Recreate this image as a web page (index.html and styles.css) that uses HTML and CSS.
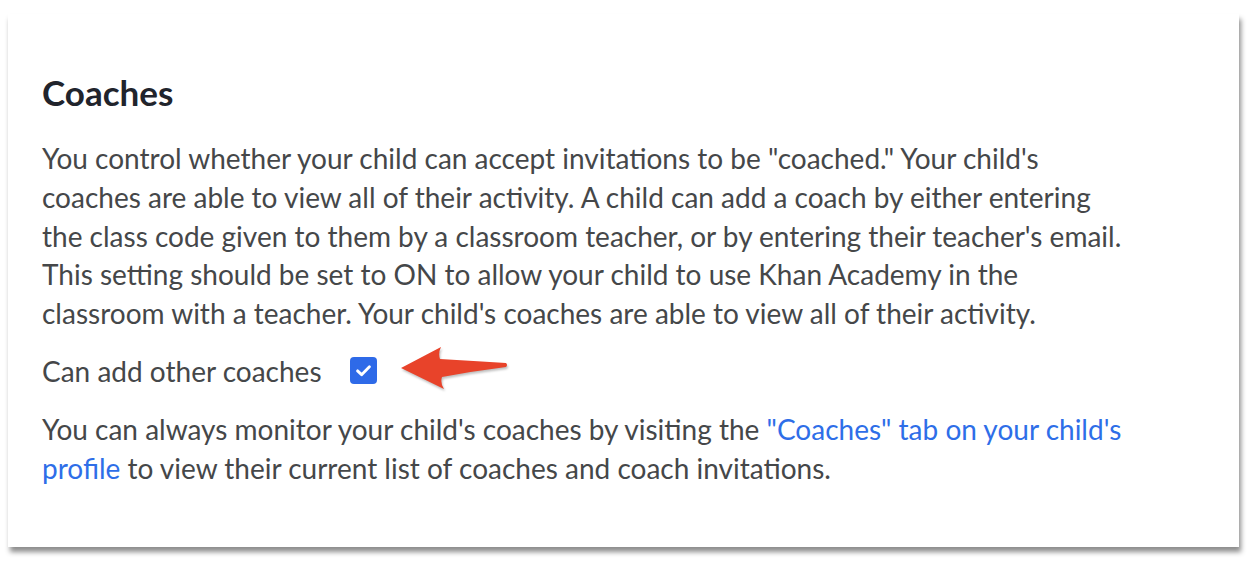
FILE: index.html
```html
<!DOCTYPE html>
<html lang="en">
<head>
    <meta charset="UTF-8">
    <meta name="viewport" content="width=device-width, initial-scale=1.0">
    <title>Coaches - Settings</title>
    <link rel="stylesheet" href="styles.css">
</head>
<body>
    <div class="card">
        <h1>Coaches</h1>
        <p class="text">You control whether your child can accept invitations to be "coached." Your child's coaches are able to view all of their activity. A child can add a coach by either entering the class code given to them by a classroom teacher, or by entering their teacher's email. This setting should be set to ON to allow your child to use Khan Academy in the classroom with a teacher. Your child's coaches are able to view all of their activity.</p>
        <div class="setting-row">
            <label for="canAddCoaches">Can add other coaches</label>
            <span class="checkbox">
                <input type="checkbox" id="canAddCoaches" checked>
                <svg viewBox="0 0 16 16" width="19" height="19" aria-hidden="true">
                    <path d="M3 8.3 L6.4 11.5 L13 4.8" fill="none" stroke="#fff" stroke-width="2.4" stroke-linecap="round" stroke-linejoin="round"/>
                </svg>
            </span>
            <svg class="arrow" viewBox="0 0 112 50" width="112" height="50" aria-hidden="true">
                <path d="M2 25 L42 4 Q39 10 41 16 Q75 18 107 20 Q109 22 107 24 Q75 28 43 34 Q41 40 45 46 Z" fill="#e8432a"/>
            </svg>
        </div>
        <p class="text">You can always monitor your child's coaches by visiting the <a href="#">"Coaches" tab on your child's profile</a> to view their current list of coaches and coach invitations.</p>
    </div>
</body>
</html>
```

FILE: styles.css
```css
* {
    margin: 0;
    padding: 0;
    box-sizing: border-box;
}
body, html {
    height: 100%;
    font-family: Lato, "Open Sans", sans-serif;
    background-color: #fff;
}
.card {
    margin: 14px 9px 0 8px;
    height: 533px;
    padding: 58px 34px 0 34px;
    background-color: #fff;
    box-shadow: 2px 5px 5px rgba(0, 0, 0, 0.45);
}
h1 {
    font-size: 35px;
    font-weight: 700;
    line-height: 40px;
    color: #21242c;
    margin-bottom: 27px;
}
.text {
    max-width: 1080px;
    font-size: 28px;
    line-height: 38.75px;
    color: #454749;
}
.text a {
    color: #2e6ee8;
    text-decoration: none;
}
.setting-row {
    display: flex;
    align-items: center;
    height: 40px;
    margin: 18px 0 19px;
    font-size: 28px;
    color: #454749;
}
.checkbox {
    position: relative;
    width: 27px;
    height: 27px;
    margin-left: 28px;
    border-radius: 4px;
    background-color: #2e6ae8;
    display: flex;
    align-items: center;
    justify-content: center;
}
.checkbox input {
    position: absolute;
    opacity: 0;
    width: 100%;
    height: 100%;
}
.arrow {
    margin-left: 22px;
    margin-top: -6px;
    filter: drop-shadow(1px 2px 1px rgba(0, 0, 0, 0.25));
}
```
